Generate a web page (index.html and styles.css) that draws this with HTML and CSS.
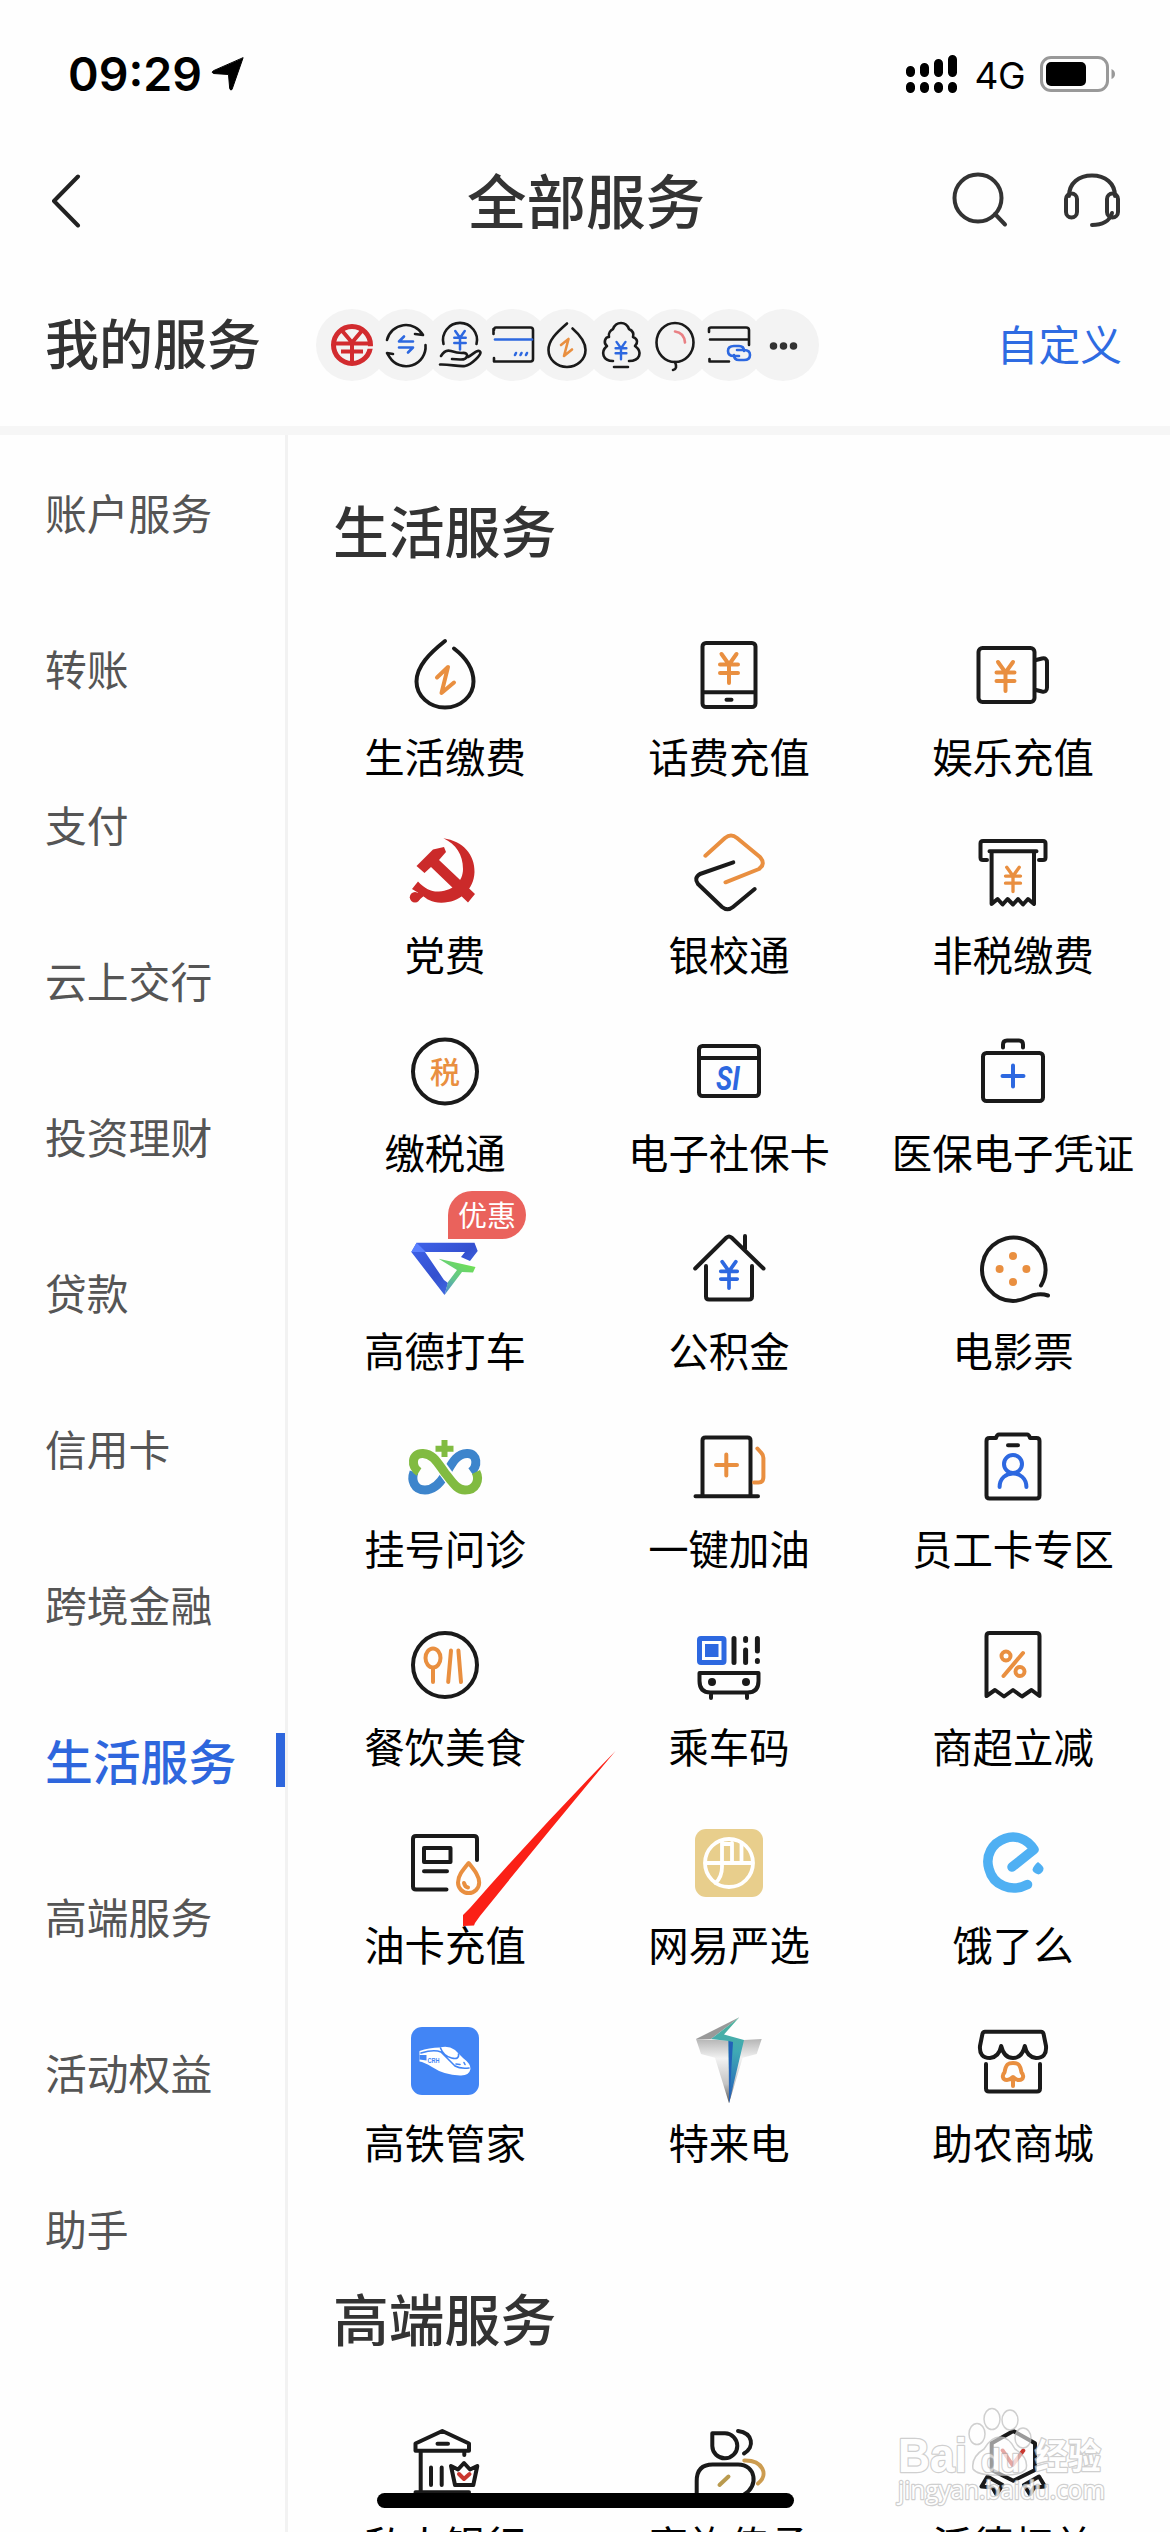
FILE: index.html
```html
<!DOCTYPE html>
<html lang="zh-CN">
<head>
<meta charset="utf-8">
<title>全部服务</title>
<link rel="stylesheet" href="styles.css">
</head>
<body>
<svg class="defs" width="0" height="0" aria-hidden="true">
  <defs>
    <symbol id="yen" viewBox="-12 -18 24 36" overflow="visible"><path d="M-7.5-14 0-3.5 7.5-14M0-3.5V15M-9-3.5H9M-9 5H9"/></symbol>
    <linearGradient id="gd-blue" x1="0" y1="0" x2="1" y2="1"><stop offset="0" stop-color="#3f63ea"/><stop offset=".5" stop-color="#3450cf"/><stop offset="1" stop-color="#4a7df0"/></linearGradient>
    <linearGradient id="gd-green" x1="0" y1="1" x2=".6" y2="0"><stop offset="0" stop-color="#4678ec"/><stop offset=".5" stop-color="#62c48e"/><stop offset="1" stop-color="#6fe054"/></linearGradient>
    <linearGradient id="silver" x1="0" y1="0" x2="0" y2="1"><stop offset="0" stop-color="#b5b5b5"/><stop offset=".3" stop-color="#f2f2f2"/><stop offset=".7" stop-color="#c4c4c4"/><stop offset="1" stop-color="#555"/></linearGradient>
    <linearGradient id="teal" x1="0" y1="0" x2="0" y2="1"><stop offset="0" stop-color="#4fb39a"/><stop offset=".4" stop-color="#3fa9b5"/><stop offset="1" stop-color="#2259b8"/></linearGradient>
  </defs>
</svg>

<header class="status">
  <div class="status-left">
    <span class="clock">09:29</span>
    <svg class="loc" viewBox="0 0 34 34"><path d="M32 1 21 32.500Q19.500 34 18.700 31.500L17.500 17.500 2.500 16.500Q0 15.500 2 14Z" fill="#000" stroke="#000" stroke-linejoin="round"/></svg>
  </div>
  <div class="status-right">
    <svg class="signal" viewBox="0 0 52 38" stroke="#000" stroke-width="9" stroke-linecap="round"><path d="M4.500 15.500v2M18.500 12.500v5M32.500 8.500v9M46.500 4.500v13M4.500 31.500v2M18.500 31.500v2M32.500 31.500v2M46.500 31.500v2"/></svg>
    <span class="net">4G</span>
    <svg class="battery" viewBox="0 0 76 36"><rect x="1.500" y="1.500" width="66" height="33" rx="9.500" fill="none" stroke="#999" stroke-width="3"/><rect x="6" y="6" width="40" height="24" rx="5"/><path d="M71.500 13q3.500 1.500 3.500 5t-3.500 5z" fill="#999"/></svg>
  </div>
</header>

<nav class="titlebar">
  <svg class="back" viewBox="0 0 30 54"><path d="M27 2.500 3 27l24 24.500"/></svg>
  <h1>全部服务</h1>
  <div class="actions">
    <svg viewBox="0 0 58 58"><circle cx="27" cy="26" r="23.500"/><path d="m44 42 10 10.500"/></svg>
    <svg viewBox="0 0 58 58"><path d="M6 24C6 11 16 3.500 29 3.500S52 11 52 24M29 53c10 0 18-4 20-12"/><rect x="3" y="21.500" width="11" height="24" rx="5.500"/><rect x="44" y="21.500" width="11" height="24" rx="5.500"/></svg>
  </div>
</nav>

<section class="mine">
  <h2>我的服务</h2>
  <ul class="quick">
    <li><svg viewBox="0 0 72 72"><g stroke="#d22b2f" stroke-width="4" stroke-linecap="butt"><circle cx="36" cy="36" r="18.500" stroke-width="5"/><path d="M25 20.500 36 33.500 47 20.500M17 34.500H56M25 42.500H47M36 33.500V55"/><path d="M49 38.500H58" stroke="#f3f3f3" stroke-width="2.500"/></g></svg></li>
    <li><svg viewBox="0 0 72 72"><path d="M17 31a19.500 19.500 0 0 1 36-5l-8-1M55.500 36a19.500 19.500 0 0 1-36 12l-2.500-4 6 1"/><path class="b" d="M43 32.500H29l5-5M29 38.500h14l-5 5"/></svg></li>
    <li><svg viewBox="0 0 72 72"><path d="M19.500 35a17 17 0 1 1 33 0M17 47q4-7 10-5 6 2 11 2c8-1 6 7-2 6.500l-8-.5M44 48c6-3 9-8 12-5.500S47 56 41 57s-16-2-25-1.500"/><use class="b" href="#yen" x="28.400" y="19.500" width="15.200" height="22.800"/></svg></li>
    <li><svg viewBox="0 0 72 72"><path d="M17 21q0-2.500 2-2.500H53.500q2.500 0 2.500 2.500V50q0 2.500-2.500 2.500H17V49M16.500 25v-5"/><path class="b" d="M18 30.500H55"/><path class="b" d="m39 44-1 2M44.500 44l-1 2M50 44l-1 2"/></svg></li>
    <li><svg viewBox="0 0 72 72"><path d="M36 14.500C25 24 17.500 31.500 17.500 41a18.500 17 0 0 0 37 0C54.500 33 49 26 41.500 19.500"/><path class="o" d="m30 36 7.500-6L33 47l8-6.500"/></svg></li>
    <li><svg viewBox="0 0 72 72"><path d="M28 52c-10 0-13-9-6-15-4-3-2-9 2-9-1-4 2-7 4-8 3-8 13-8 16 0 4 2 5 5 4 8 5 2 5 6 2 9 8 6 5 15-6 15M29 58h14"/><use class="b" href="#yen" x="28.800" y="30.500" width="14.400" height="21.600"/></svg></li>
    <li><svg viewBox="0 0 72 72"><ellipse cx="36" cy="33.500" rx="18.500" ry="19.500"/><path d="M36 53q3 7-2 8"/><path d="M36 22.500q9 1 10 11" stroke="#e98084"/></svg></li>
    <li><svg viewBox="0 0 72 72"><path d="M16 23v-3q0-1.500 2-1.500H53q3 0 3 2.500V36M17 30.500H55M16.500 50v2.500H36"/><path class="b" d="M46 47h-5q-6 0-6-5t6-5h5q5 0 5 5M44 41h7q6 0 6 5t-6 5h-5q-5 0-5-5"/></svg></li>
    <li><svg viewBox="0 0 72 72"><path d="M26.500 37h.01M36.500 37h.01M46.500 37h.01" stroke="#333" stroke-width="7.500"/></svg></li>
  </ul>
  <a class="custom">自定义</a>
</section>

<main class="body">
  <aside class="sidebar">
    <a>账户服务</a><a>转账</a><a>支付</a><a>云上交行</a><a>投资理财</a><a>贷款</a><a>信用卡</a><a>跨境金融</a><a class="active">生活服务</a><a>高端服务</a><a>活动权益</a><a>助手</a>
  </aside>

  <div class="content">
    <h2>生活服务</h2>
    <div class="grid">
      <div class="tile"><svg viewBox="0 0 96 96"><path d="M48 14C33 26 19.500 39 19.500 54.500a28.500 26 0 0 0 57 0C76.500 41 68 30 57 21.500"/><path class="o" d="M40 50.500 51 40l-6.500 26L57 55.500"/></svg><span>生活缴费</span></div>
      <div class="tile"><svg viewBox="0 0 96 96"><rect x="21.500" y="16" width="53" height="64" rx="3.500"/><path d="M22 65.300H74M45.500 72.700h5"/><use class="o" href="#yen" x="36" y="23" width="24" height="36"/></svg><span>话费充值</span></div>
      <div class="tile"><svg viewBox="0 0 96 96"><rect x="13.500" y="21" width="56" height="54" rx="4"/><path d="m71 33 6-1.500q5-1 5 4v25q0 5-5 4L71 63"/><use class="o" href="#yen" x="28.500" y="30" width="24" height="38"/></svg><span>娱乐充值</span></div>

      <div class="tile"><svg viewBox="0 0 96 96"><g fill="#cb2a2a" stroke="none"><path d="M46.400 13.300C66 16 78 30 77.500 47 77 65 62 78 44 77.700 35 77.500 29 74 25 70L15 64l6-7.500C28 64 35 67 42 66.500 57 65.500 66 56 66 44 66 30 59 19 46.400 13.300z"/><circle cx="18" cy="72.300" r="5.200"/><path d="M18 70l6-5 4 5-6 5zM19.500 41 36 24.500 47 22l2 5-7 8L78 69l-7 8.500L34 42l-6.500 6z"/></g></svg><span>党费</span></div>
      <div class="tile"><svg viewBox="0 0 96 96"><path class="o" d="M24.400 30.700 44 13q6-5 12 0l23 19q6 7-1 12L44.500 57.300"/><path d="M52.300 37.300 19 49q-6.500 4-2 10l24 23q5.500 4.500 11 0L73.700 64"/></svg><span>银校通</span></div>
      <div class="tile"><svg viewBox="0 0 96 96"><path d="M22 35H18q-2.500 0-2.500-2.500V18.500Q15.500 16 18 16H78q2.500 0 2.500 2.500v14Q80.500 35 78 35h-4M24.500 26.300H71.500M26.600 27V79l6-5 5 5.500 5-5.500 5.400 5.500 5-5.500 5 5.500 5-5.500 6 5V27"/><use class="o" href="#yen" x="38" y="39" width="20" height="30"/></svg><span>非税缴费</span></div>

      <div class="tile"><svg viewBox="0 0 96 96"><circle cx="48" cy="48.500" r="32"/><text class="tax" x="48" y="59.500" text-anchor="middle">税</text></svg><span>缴税通</span></div>
      <div class="tile"><svg viewBox="0 0 96 96"><rect x="18" y="23" width="60" height="50" rx="3.500"/><path d="M18 35H78"/><text class="si" x="35" y="67" textLength="24" lengthAdjust="spacingAndGlyphs">SI</text></svg><span>电子社保卡</span></div>
      <div class="tile"><svg viewBox="0 0 96 96"><rect x="18" y="30" width="60" height="48" rx="3.500"/><path d="M38 24.500v-3q0-4 4-4H54q4 0 4 4v3"/><path class="b" d="M48 42.500v21M37.500 53h21"/></svg><span>医保电子凭证</span></div>

      <div class="tile"><em class="tag">优惠</em><svg viewBox="0 0 96 96"><g stroke="none"><path fill="url(#gd-blue)" d="M19.600 21.700H77.500L80.700 30 73 40l-9-4 4-5H28L47 59l4 3-3.500 12L14.300 31z"/><path fill="#5b80ff" d="m14.300 31 5.300-9.300L29 31z"/><path fill="url(#gd-green)" d="M41.600 37.700 78.500 46 76 51.500 65 51 47.500 74 51 61 60 49z"/></g></svg><span>高德打车</span></div>
      <div class="tile"><svg viewBox="0 0 96 96"><path d="M14.200 47.500 45.500 16.500q2.500-2 5 0L82.500 47.500M64 15V28M25 45V75.500q0 3 3 3H68q3 0 3-3V45"/><use class="b" href="#yen" x="36" y="37" width="24" height="33"/></svg><span>公积金</span></div>
      <div class="tile"><svg viewBox="0 0 96 96"><path d="M76 64.500A31.700 31.700 0 1 0 48 80C60 80 64 74 72 73.500 76 73 80 73.500 83 74.500"/><g fill="#e98f40" stroke="none"><circle cx="48" cy="35" r="4"/><circle cx="34.600" cy="48" r="4"/><circle cx="61.400" cy="48" r="4"/><circle cx="48" cy="61" r="4"/></g></svg><span>电影票</span></div>

      <div class="tile"><svg viewBox="0 0 96 96"><g stroke-width="9" stroke-linecap="butt"><path stroke="#3d85cc" d="M74 53C81 48 81 34 70 34.500 58 35 54 47 48 56 42 66 36 71 28 71 17 71 14 61 17 53"/><path stroke="#fff" stroke-width="12" d="M40 42 56 64"/><path stroke="#81bb41" d="M22 53C14 48 14 34 26 34.500 36 35 40 43 48 54 56 64 60 71 68 71 79 71 83 61 79 53"/></g><path d="M47.500 21V38M38.500 29.700H56.500" stroke="#81bb41" stroke-width="6" stroke-linecap="butt"/></svg><span>挂号问诊</span></div>
      <div class="tile"><svg viewBox="0 0 96 96"><path d="M21.500 76V21.500q0-3 3-3H66.500q3 0 3 3V76M14.500 77.300H77"/><path class="o" d="M45.300 35.500v21M35 46H56M76.400 29.500l4 4.500q2 2 2 5V58q0 5.500-5 5.500H73"/></svg><span>一键加油</span></div>
      <div class="tile"><svg viewBox="0 0 96 96"><path d="M31 19H24.500q-3 0-3 3V76.500q0 3 3 3h47q3 0 3-3V22q0-3-3-3H65q-1-3.500-3-3.500H34q-2 0-3 3.500M43 26.300H53"/><g class="b"><circle cx="48" cy="45" r="9"/><path d="M34.600 68c0-18 26.800-18 26.800 0"/></g></svg><span>员工卡专区</span></div>

      <div class="tile"><svg viewBox="0 0 96 96"><circle cx="48" cy="48" r="32"/><g class="o"><ellipse cx="36" cy="41" rx="7.500" ry="9.500"/><path d="M36 51V65M54 33.500 51.200 65M61.400 33.500 64 65"/></g></svg><span>餐饮美食</span></div>
      <div class="tile"><svg viewBox="0 0 96 96"><rect x="18.500" y="21.500" width="24.500" height="24" rx="1.500" stroke="#2d68e0" stroke-width="5"/><path d="M24 27H37.500V40H24z" fill="#2d68e0" stroke="none"/><path d="M53 21.500V45.500M64.600 21.500v2M64.600 33V45.500M76.400 21.500V34M76.400 43.500v1" stroke-width="5"/><path d="M18.500 56H77.500V64q0 11.500-11 11.500h-37q-11 0-11-11.500zM30 77v4M66 77v4"/><path d="M31 65h.01M65 65h.01" stroke-width="8"/></svg><span>乘车码</span></div>
      <div class="tile"><svg viewBox="0 0 96 96"><path d="M21.500 79V19q0-3 3-3h47q3 0 3 3V79L66.500 73 57 79.500 48 73 39 79.500 30 73z"/><g class="o"><circle cx="41" cy="39" r="4.500"/><circle cx="55" cy="54.500" r="4.500"/><path d="M58 36 38.500 59"/></g></svg><span>商超立减</span></div>

      <div class="tile"><svg viewBox="0 0 96 96"><path d="M80 45V24q0-3-3-3H19q-3 0-3 3V71.500q0 3 3 3H49.500M27 33H53.500V47H27zM27 56.300H50"/><path class="o" d="M71.600 48C65 56 61 61 61 67.500a10.600 10.600 0 0 0 21.200 0C82.200 61 78 56 71.600 48zM67 68q1 4 4 4.500"/></svg><span>油卡充值</span></div>
      <div class="tile"><svg viewBox="0 0 96 96"><rect x="14" y="14" width="68" height="68" rx="11" fill="#e8ce8c" stroke="none"/><g stroke="#fff" stroke-width="3.800"><circle cx="48" cy="48" r="24"/><path d="M24.500 48H71.500M41 27V52q0 10-6.500 16M41 29H51M51 28V48M60.500 29V48"/></g></svg><span>网易严选</span></div>
      <div class="tile"><svg viewBox="0 0 96 96"><path d="M47 52 69 34.500C62 23 50 20 40 23.500 27 28 20 41 24 54 28 70 46 78 62.500 69.500" stroke="#4fb0f3" stroke-width="9.500"/><path d="M73 47q5.500 4 5.500 6.500 0 4-5 6-6-2-6-5 1-4 5.500-7.500z" fill="#4fb0f3" stroke="none"/></svg><span>饿了么</span></div>

      <div class="tile"><svg viewBox="0 0 96 96"><rect x="14" y="14" width="68" height="68" rx="11" fill="#4285f5" stroke="none"/><path d="M22.500 38Q32 34.500 43 34.500 51 32 58 37L66 45Q74 51 73.500 56 72 63 63 62.500 47 62 35 54 27 49 22.500 48.500z" fill="#fff" stroke="none"/><path d="M24 40q13-4 20-1l14 14q5 3 14 2M43.500 35q3 8 11 10 8 2 7-4M59 51l4 .5M67 49.500l1 2" stroke="#4285f5" stroke-width="1.600"/><path d="M22.500 42h7v5.500l-7-1z" fill="#4285f5" stroke="none"/><text class="crh" x="30.500" y="50" textLength="12" lengthAdjust="spacingAndGlyphs">CRH</text></svg><span>高铁管家</span></div>
      <div class="tile"><svg viewBox="0 0 96 96"><g stroke="none"><path fill="url(#silver)" d="M15 26 47.500 27.500 63 27 80.700 26 75.700 41 61.700 44.700 48 90.300 34 44.700 20 41z"/><path fill="#999" d="M58.300 4.300 15 26 30 26z"/><path fill="url(#teal)" d="M58.300 4.300 30 26 47.500 28 48 90.300 63 27 43 21.500z"/><path fill="#2262b8" d="M47.500 28 52 29 48.500 86z"/></g></svg><span>特来电</span></div>
      <div class="tile"><svg viewBox="0 0 96 96"><path d="M20 18.700H76q2 0 2.500 2L81 33q1 12-10 12-9-1-11.200-12Q57 45 48 45T36.200 33Q34 44 25 45 14 45 15 33l2.500-12.300q.5-2 2.500-2zM21 51V75.500q0 3 3 3H72q3 0 3-3V51"/><path class="o" d="M48 66v7M42 67c-5 0-5-5-2.500-7.500C41 50.500 43.500 50 48 50s7 .5 8.500 9.500C59 62 59 67 54 67q-3 0-6-3-3 3-6 3z"/></svg><span>助农商城</span></div>
    </div>

    <h2 class="next">高端服务</h2>
    <div class="grid">
      <div class="tile"><svg viewBox="0 0 96 96"><path d="M18.500 35.700V28.500L45.300 16 72 28.500v7.200zM40.500 28.700H51M23.700 36V77M18.500 77.300H72M67.300 36v4M34 52.500V70M44.700 52.500V70M54 51 58 70H76.300L80.300 51 73 54.500 67 48 61 54.500z"/><path d="m62 59 5 5 5.500-5" stroke="#c9372f"/></svg><span>私人银行</span></div>
      <div class="tile"><svg viewBox="0 0 96 96"><path d="M31.300 18.300H44A12.500 12.500 0 1 1 31.300 31zM57 16c15 2 17 16 6 22.500M15.700 84V66q0-16.500 16-16.500H57c18 0 21 22 6 30"/><path d="M63.300 45.500C82 45 88 60 77 68.500" stroke="#cc9c50"/><path d="m38.500 70 9-8.500" stroke="#b99a4e"/></svg><span>家族传承</span></div>
      <div class="tile"><svg viewBox="0 0 96 96"><path d="M48.300 16 70 28.300V55L48.300 65.700 26.700 55V28.300zM22.500 61.500l-6 10 11 1 4 7 6-9.500zM74 61.500l6 10-11 1-4 7-6-9.500z"/><path d="M37.700 35.500 47.500 50 58.300 35.500" stroke="#c9372f"/></svg><span>沃德权益</span></div>
    </div>
  </div>
</main>

<svg class="pointer" viewBox="0 0 156 178"><path d="M154.500 0 Q80 76 9 157L2 164 2 175 13 174.500 14 172 19 165Q85 83 154.500 0z" fill="#fb2016"/></svg>
<div class="watermark">
  <svg viewBox="0 0 220 112">
    <g class="wm-shape"><ellipse cx="89" cy="34" rx="8" ry="10.500"/><ellipse cx="104" cy="19" rx="8" ry="10.500"/><ellipse cx="122" cy="20" rx="8" ry="10"/><ellipse cx="135" cy="38" rx="8" ry="10"/><path d="M112 37q9 0 15 12 14 9 11 20-5 7-26 6-22 1-27-6-2-12 11-20 7-12 16-12z"/></g>
    <text x="10" y="72" class="wm-big" textLength="69" lengthAdjust="spacingAndGlyphs">Bai</text>
    <text x="93" y="72" class="wm-du" textLength="39" lengthAdjust="spacingAndGlyphs">du</text>
    <text x="147" y="69" class="wm-cn" textLength="66" lengthAdjust="spacingAndGlyphs">经验</text>
    <text x="10" y="99" class="wm-url" textLength="207" lengthAdjust="spacingAndGlyphs">jingyan.baidu.com</text>
  </svg>
</div>
<div class="home"></div>
</body>
</html>
```
FILE: styles.css
```css
* { box-sizing: border-box; margin: 0; padding: 0; }

html, body { width: 1170px; height: 2532px; overflow: hidden; }

body {
  position: relative;
  display: flex;
  flex-direction: column;
  background: #fefefe;
  color: #000;
  font-family: "Noto Sans CJK SC", "Noto Sans", sans-serif;
}

.defs { position: absolute; }

svg { display: block; fill: none; stroke-linecap: round; stroke-linejoin: round; }

h1, h2 { font-weight: 500; color: #333; white-space: nowrap; }

/* status bar */
.status {
  display: flex;
  justify-content: space-between;
  align-items: center;
  height: 148px;
  padding: 0 54px 0 68px;
}
.status-left, .status-right { display: flex; align-items: center; }
.clock { font: 600 46.500px/60px Inter, sans-serif; }
.loc { width: 34px; height: 34px; margin-left: 9px; }
.signal { width: 52px; height: 38px; }
.net { margin: 4px 15px 0 16px; font: 400 37px/50px Inter, sans-serif; letter-spacing: -.5px; }
.battery { width: 76px; height: 36px; fill: #000; }

/* title bar */
.titlebar {
  display: grid;
  grid-template-columns: 1fr auto 1fr;
  align-items: center;
  height: 106px;
  padding: 0 49px 0 51px;
}
.titlebar h1 { padding-bottom: 6px; font-size: 59.500px; line-height: 100px; }
.back { width: 30px; height: 54px; stroke: #222; stroke-width: 4; }
.actions { display: flex; justify-content: flex-end; gap: 54px; }
.actions svg { width: 58px; height: 58px; stroke: #333; stroke-width: 4; }

/* my services */
.mine {
  display: flex;
  align-items: center;
  height: 181px;
  padding: 10px 48px 0 45px;
  border-bottom: 9px solid #f6f6f6;
}
.mine h2 { width: 271px; padding-bottom: 6px; font-size: 54px; line-height: 80px; }
.quick { display: flex; flex: 1; list-style: none; }
.quick li { width: 72px; height: 72px; margin-right: -18.200px; border-radius: 50%; background: #f3f3f3; }
.quick svg { position: relative; z-index: 1; width: 72px; height: 72px; stroke: #1a1a1a; stroke-width: 2.600; }
.quick use { stroke-width: 4; }
.custom { padding-bottom: 5px; color: #2e6be2; font-size: 41.800px; line-height: 60px; }

/* main area */
.body { display: flex; flex: 1; min-height: 0; }

.sidebar {
  display: flex;
  flex-direction: column;
  width: 288px;
  border-right: 3px solid #f2f2f2;
}
.sidebar a {
  display: flex;
  align-items: center;
  justify-content: space-between;
  flex: none;
  height: 156px;
  padding: 0 0 3px 45px;
  color: #555;
  font-size: 41.800px;
}
.sidebar .active { color: #2e66dd; font-size: 47.800px; font-weight: 500; }
.sidebar .active::after { content: ""; width: 9px; height: 54px; background: #2e66dd; }

.content { flex: 1; padding-top: 54px; }
.content h2 { padding-left: 45px; margin-bottom: 58px; font-size: 55.800px; line-height: 80px; }
.content .next { margin-top: 66px; }

.grid {
  display: grid;
  grid-template-columns: repeat(3, 284px);
  grid-auto-rows: 198px;
  margin-left: 15px;
}
.tile { position: relative; display: flex; flex-direction: column; align-items: center; }
.tile svg { width: 96px; height: 96px; stroke: #1a1a1a; stroke-width: 4; }
.tile span { margin-top: 3px; font-size: 40.400px; line-height: 60px; white-space: nowrap; }

.o { stroke: #e98f40; }
.b { stroke: #2d68e0; }
text { stroke: none; }
.tax { fill: #e98f40; font-size: 30px; font-weight: 500; }
.si { fill: #2d68e0; font: italic 700 34px Roboto, sans-serif; }
.crh { fill: #4285f5; font: 700 8px "Liberation Sans", sans-serif; }

.tag {
  position: absolute;
  left: 145px;
  top: -30px;
  width: 78px;
  height: 48px;
  border-radius: 24px 24px 24px 0;
  background: #ea625c;
  color: #fff;
  font-size: 29px;
  font-style: normal;
  line-height: 47px;
  text-align: center;
}

/* overlays */
.pointer { position: absolute; left: 461px; top: 1751px; width: 156px; height: 178px; }
.home { position: absolute; left: 377px; top: 2493px; width: 417px; height: 15px; border-radius: 8px; background: #000; }
.watermark { position: absolute; left: 888px; top: 2400px; width: 220px; height: 112px; opacity: .8; }
.wm-shape { fill: #fff; fill-opacity: .7; stroke: #c4c4c4; stroke-width: 1.500; }
.watermark text { fill: #fff; stroke: #c4c4c4; stroke-width: 2.500; paint-order: stroke; }
.wm-big { font: 700 48px "Liberation Sans", sans-serif; }
.wm-du { font: 700 34px "Liberation Sans", sans-serif; }
.wm-cn { font: 700 35px "Noto Sans CJK SC", sans-serif; }
.wm-url { font: 400 26px "Open Sans", sans-serif; }
```
